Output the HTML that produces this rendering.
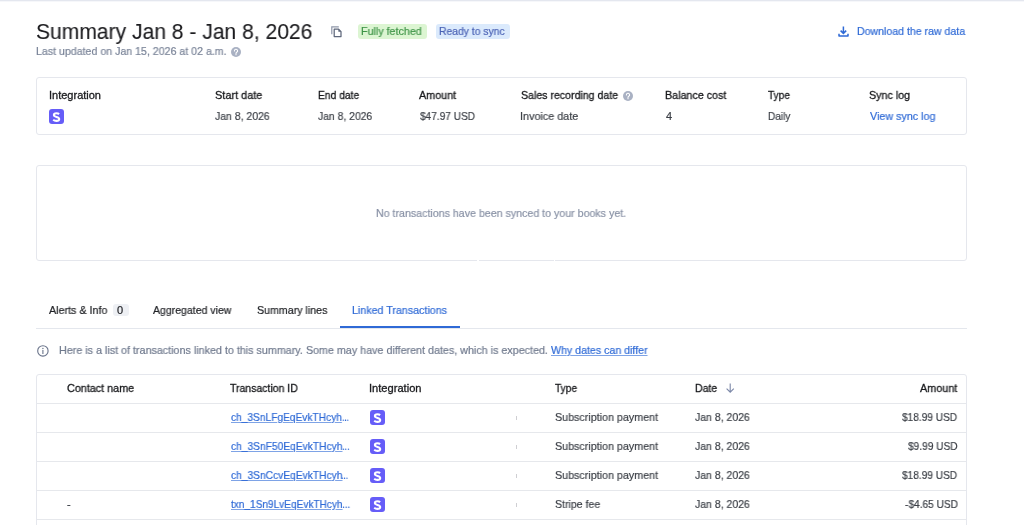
<!DOCTYPE html>
<html><head><meta charset="utf-8">
<style>
*{box-sizing:border-box;margin:0;padding:0}
html,body{width:1024px;height:525px;overflow:hidden;background:#fff}
body{font-family:"Liberation Sans",sans-serif;position:relative}
.t{position:absolute;white-space:nowrap;line-height:13px;font-size:11px;transform-origin:0 0;will-change:transform;-webkit-text-stroke:0.2px currentColor}
.title{font-size:21.5px;line-height:24px;color:#1c1c1f;-webkit-text-stroke:0.1px currentColor}
.sub{color:#7a8498}
.bt{font-size:11px}
.g{color:#3e9447}
.bl{color:#4a62b5}
.h{color:#18191c;-webkit-text-stroke:0.3px #18191c}
.v{color:#3b3f46}
.link{color:#2f6ad6}
.ul{text-decoration:underline;text-decoration-thickness:1px;text-underline-offset:1px;text-decoration-color:#7ea3e6}
.grey{color:#6f798d}
.grey2{color:#8891a5}
.tab{color:#202226;-webkit-text-stroke:0.2px currentColor}
.tab.link{color:#2f6ad6}
.card{position:absolute;border:1px solid #e5e7ed;border-radius:3px}
.badge{position:absolute;height:15px;border-radius:3px}
.s{position:absolute;width:15px;height:15px;border-radius:3px;background:#665df8}
.line{position:absolute;height:1px;background:#e6e8ec}
.tick{position:absolute;width:1px;height:4px;background:#cfcfd3}
</style></head><body>
<div style="position:absolute;left:0;top:0;width:1024px;height:1px;background:#e4e7ef"></div>
<div style="position:absolute;left:0;top:1px;width:1024px;height:1px;background:#f6f7fa"></div>
<div class="badge" style="left:358px;top:24px;width:69px;background:#dcf5d2"></div>
<div class="badge" style="left:436px;top:24px;width:74px;background:#dbeafc"></div>
<svg style="position:absolute;left:231px;top:47px" width="10" height="10" viewBox="0 0 10 10"><circle cx="5" cy="5" r="5" fill="#a9b1c3"/><path d="M3.4 3.9a1.6 1.6 0 1 1 2.3 1.4c-.5.3-.7.5-.7 1.1" fill="none" stroke="#fff" stroke-width="1.1" stroke-linecap="round"/><circle cx="5" cy="7.7" r=".65" fill="#fff"/></svg>
<svg style="position:absolute;left:623px;top:90.5px" width="10" height="10" viewBox="0 0 10 10"><circle cx="5" cy="5" r="5" fill="#a9b1c3"/><path d="M3.4 3.9a1.6 1.6 0 1 1 2.3 1.4c-.5.3-.7.5-.7 1.1" fill="none" stroke="#fff" stroke-width="1.1" stroke-linecap="round"/><circle cx="5" cy="7.7" r=".65" fill="#fff"/></svg>
<svg style="position:absolute;left:330px;top:25px" width="13" height="13" viewBox="0 0 13 13"><path d="M1.8 9.2V1.8H8.8" fill="none" stroke="#8e96a8" stroke-width="1.2"/><path d="M4.2 4.2H8.6L11 6.6V11.6H4.2Z" fill="#fff" stroke="#5e677b" stroke-width="1.25" stroke-linejoin="round"/><path d="M8.4 3.9V6.8H11.3Z" fill="#5e677b"/></svg>
<svg style="position:absolute;left:837px;top:25px" width="13" height="13" viewBox="0 0 13 13"><path d="M6.4 1.6V8.2M3.6 5.6L6.4 8.4L9.2 5.6" fill="none" stroke="#2f6ad6" stroke-width="1.5"/><path d="M2 8.7V11H11V8.7" fill="none" stroke="#2f6ad6" stroke-width="1.5" stroke-linejoin="round"/></svg>
<div class="card" style="left:36px;top:77px;width:931px;height:58px"></div>
<div class="card" style="left:36px;top:165px;width:931px;height:96px"></div>
<div class="card" style="left:36px;top:374px;width:931px;height:200px"></div>
<div style="position:absolute;left:477px;top:260px;width:2px;height:1px;background:#fff"></div>
<div style="position:absolute;left:554px;top:260px;width:1px;height:1px;background:#fff"></div>
<div class="s" style="left:49px;top:109px"><svg width="15" height="15" viewBox="0 0 15 15" style="position:absolute;left:0;top:0"><path d="M10.1 5.1C9.4 4.5 8.5 4.2 7.4 4.2C5.9 4.2 4.9 4.9 4.9 6C4.9 8.3 10.2 7.5 10.2 10C10.2 11.2 9.1 11.9 7.4 11.9C6.2 11.9 5 11.5 4.2 10.8" fill="none" stroke="#fff" stroke-width="2.1"/></svg></div>
<div class="badge" style="left:113px;top:304px;width:16px;height:12px;background:#eef0f4"></div>
<div class="t tab" style="left:117px;top:304px">0</div>
<div class="line" style="left:36px;top:328px;width:931px;background:#e4e7ed"></div>
<div style="position:absolute;left:340px;top:326px;width:120px;height:2px;background:#2f6ad6"></div>
<svg style="position:absolute;left:37px;top:345px" width="12" height="12" viewBox="0 0 12 12"><circle cx="5.9" cy="5.9" r="5.2" fill="none" stroke="#69738a" stroke-width="1.1"/><path d="M5.9 5.1V8.9" stroke="#69738a" stroke-width="1.1"/><circle cx="5.9" cy="3.5" r=".7" fill="#69738a"/></svg>
<div class="line" style="left:37px;top:403px;width:929px"></div>
<div class="line" style="left:37px;top:432px;width:929px"></div>
<div class="line" style="left:37px;top:461px;width:929px"></div>
<div class="line" style="left:37px;top:490px;width:929px"></div>
<div class="line" style="left:37px;top:519px;width:929px"></div>
<svg style="position:absolute;left:724px;top:382px" width="13" height="12" viewBox="0 0 13 12"><path d="M6.2 1.5V10.2M2.6 6.6L6.2 10.2L9.8 6.6" fill="none" stroke="#7c88a8" stroke-width="1.1"/></svg>
<div class="s" style="left:370px;top:410px"><svg width="15" height="15" viewBox="0 0 15 15" style="position:absolute;left:0;top:0"><path d="M10.1 5.1C9.4 4.5 8.5 4.2 7.4 4.2C5.9 4.2 4.9 4.9 4.9 6C4.9 8.3 10.2 7.5 10.2 10C10.2 11.2 9.1 11.9 7.4 11.9C6.2 11.9 5 11.5 4.2 10.8" fill="none" stroke="#fff" stroke-width="2.1"/></svg></div>
<div class="tick" style="left:516px;top:416px"></div>
<div class="s" style="left:370px;top:439px"><svg width="15" height="15" viewBox="0 0 15 15" style="position:absolute;left:0;top:0"><path d="M10.1 5.1C9.4 4.5 8.5 4.2 7.4 4.2C5.9 4.2 4.9 4.9 4.9 6C4.9 8.3 10.2 7.5 10.2 10C10.2 11.2 9.1 11.9 7.4 11.9C6.2 11.9 5 11.5 4.2 10.8" fill="none" stroke="#fff" stroke-width="2.1"/></svg></div>
<div class="tick" style="left:516px;top:445px"></div>
<div class="s" style="left:370px;top:468px"><svg width="15" height="15" viewBox="0 0 15 15" style="position:absolute;left:0;top:0"><path d="M10.1 5.1C9.4 4.5 8.5 4.2 7.4 4.2C5.9 4.2 4.9 4.9 4.9 6C4.9 8.3 10.2 7.5 10.2 10C10.2 11.2 9.1 11.9 7.4 11.9C6.2 11.9 5 11.5 4.2 10.8" fill="none" stroke="#fff" stroke-width="2.1"/></svg></div>
<div class="tick" style="left:516px;top:474px"></div>
<div class="s" style="left:370px;top:497px"><svg width="15" height="15" viewBox="0 0 15 15" style="position:absolute;left:0;top:0"><path d="M10.1 5.1C9.4 4.5 8.5 4.2 7.4 4.2C5.9 4.2 4.9 4.9 4.9 6C4.9 8.3 10.2 7.5 10.2 10C10.2 11.2 9.1 11.9 7.4 11.9C6.2 11.9 5 11.5 4.2 10.8" fill="none" stroke="#fff" stroke-width="2.1"/></svg></div>
<div class="tick" style="left:516px;top:503px"></div>
<div class="t v" style="left:67px;top:498px">-</div>
<div id="title" class="t title" style="left:35.77px;top:20px;transform:scaleX(0.9800)">Summary Jan 8 - Jan 8, 2026</div>
<div id="sub" class="t sub" style="left:35.72px;top:45px;transform:scaleX(0.9648)">Last updated on Jan 15, 2026 at 02 a.m.</div>
<div id="b1t" class="t bt g" style="left:361.45px;top:25px;transform:scaleX(0.9737)">Fully fetched</div>
<div id="b2t" class="t bt bl" style="left:439.22px;top:25px;transform:scaleX(0.9418)">Ready to sync</div>
<div id="dl" class="t v link" style="left:857.45px;top:25px;transform:scaleX(0.9608)">Download the raw data</div>
<div id="h1" class="t h" style="left:48.77px;top:89px;transform:scaleX(0.9932)">Integration</div>
<div id="h2" class="t h" style="left:214.62px;top:89px;transform:scaleX(0.9910)">Start date</div>
<div id="h3" class="t h" style="left:317.71px;top:89px;transform:scaleX(0.9350)">End date</div>
<div id="h4" class="t h" style="left:419.27px;top:89px;transform:scaleX(0.9804)">Amount</div>
<div id="h5" class="t h" style="left:521.41px;top:89px;transform:scaleX(0.9623)">Sales recording date</div>
<div id="h6" class="t h" style="left:665.42px;top:89px;transform:scaleX(0.9737)">Balance cost</div>
<div id="h7" class="t h" style="left:768.25px;top:89px;transform:scaleX(0.9211)">Type</div>
<div id="h8" class="t h" style="left:869.40px;top:89px;transform:scaleX(0.9740)">Sync log</div>
<div id="v2" class="t v" style="left:215.24px;top:110px;transform:scaleX(0.9519)">Jan 8, 2026</div>
<div id="v3" class="t v" style="left:317.64px;top:110px;transform:scaleX(0.9434)">Jan 8, 2026</div>
<div id="v4" class="t v" style="left:419.64px;top:110px;transform:scaleX(0.9177)">$47.97 USD</div>
<div id="v5" class="t v" style="left:520.46px;top:110px;transform:scaleX(0.9814)">Invoice date</div>
<div id="v6" class="t v" style="left:665.50px;top:110px;transform:scaleX(1.0000)">4</div>
<div id="v7" class="t v" style="left:767.92px;top:110px;transform:scaleX(0.9133)">Daily</div>
<div id="v8" class="t v link" style="left:869.75px;top:110px;transform:scaleX(0.9761)">View sync log</div>
<div id="empty" class="t v grey2" style="left:375.69px;top:207px;transform:scaleX(0.9669)">No transactions have been synced to your books yet.</div>
<div id="tab1" class="t tab" style="left:48.50px;top:304px;transform:scaleX(0.9752)">Alerts &amp; Info</div>
<div id="tab2" class="t tab" style="left:153.25px;top:304px;transform:scaleX(0.9558)">Aggregated view</div>
<div id="tab3" class="t tab" style="left:256.85px;top:304px;transform:scaleX(0.9683)">Summary lines</div>
<div id="tab4" class="t tab link" style="left:352.19px;top:304px;transform:scaleX(0.9713)">Linked Transactions</div>
<div id="info" class="t v grey" style="left:58.68px;top:344px;transform:scaleX(0.9761)">Here is a list of transactions linked to this summary. Some may have different dates, which is expected.</div>
<div id="infol" class="t v link ul" style="left:551.25px;top:344px;transform:scaleX(0.9649)">Why dates can differ</div>
<div id="th1" class="t h" style="left:67.28px;top:382px;transform:scaleX(0.9807)">Contact name</div>
<div id="th2" class="t h" style="left:230.38px;top:382px;transform:scaleX(0.9531)">Transaction ID</div>
<div id="th3" class="t h" style="left:369.17px;top:382px;transform:scaleX(1.0109)">Integration</div>
<div id="th4" class="t h" style="left:555.48px;top:382px;transform:scaleX(0.9272)">Type</div>
<div id="th5" class="t h" style="left:694.69px;top:382px;transform:scaleX(0.9587)">Date</div>
<div id="th6" class="t h" style="left:920.49px;top:382px;transform:scaleX(0.9844)">Amount</div>
<div id="l0" class="t v link ul" style="left:230.56px;top:411px;transform:scaleX(0.9255)">ch_3SnLFgEqEvkTHcyh</div>
<div id="e0" class="t v link" style="left:341.62px;top:411px;transform:scaleX(0.7749)">...</div>
<div id="ty0" class="t v" style="left:555.33px;top:411px;transform:scaleX(0.9744)">Subscription payment</div>
<div id="d0" class="t v" style="left:694.91px;top:411px;transform:scaleX(0.9540)">Jan 8, 2026</div>
<div id="a0" class="t v" style="left:902.46px;top:411px;transform:scaleX(0.9185)">$18.99 USD</div>
<div id="l1" class="t v link ul" style="left:230.57px;top:440px;transform:scaleX(0.9297)">ch_3SnF50EqEvkTHcyh</div>
<div id="e1" class="t v link" style="left:341.81px;top:440px;transform:scaleX(0.8353)">...</div>
<div id="ty1" class="t v" style="left:555.33px;top:440px;transform:scaleX(0.9744)">Subscription payment</div>
<div id="d1" class="t v" style="left:694.91px;top:440px;transform:scaleX(0.9540)">Jan 8, 2026</div>
<div id="a1" class="t v" style="left:908.35px;top:440px;transform:scaleX(0.9229)">$9.99 USD</div>
<div id="l2" class="t v link ul" style="left:230.57px;top:469px;transform:scaleX(0.9298)">ch_3SnCcvEqEvkTHcyh</div>
<div id="e2" class="t v link" style="left:341.41px;top:469px;transform:scaleX(0.7922)">...</div>
<div id="ty2" class="t v" style="left:555.33px;top:469px;transform:scaleX(0.9744)">Subscription payment</div>
<div id="d2" class="t v" style="left:694.91px;top:469px;transform:scaleX(0.9540)">Jan 8, 2026</div>
<div id="a2" class="t v" style="left:902.46px;top:469px;transform:scaleX(0.9185)">$18.99 USD</div>
<div id="l3" class="t v link ul" style="left:230.50px;top:498px;transform:scaleX(0.9171)">txn_1Sn9LvEqEvkTHcyh</div>
<div id="e3" class="t v link" style="left:342.26px;top:498px;transform:scaleX(0.9080)">...</div>
<div id="ty3" class="t v" style="left:555.34px;top:498px;transform:scaleX(0.9615)">Stripe fee</div>
<div id="d3" class="t v" style="left:694.91px;top:498px;transform:scaleX(0.9540)">Jan 8, 2026</div>
<div id="a3" class="t v" style="left:905.21px;top:498px;transform:scaleX(0.9211)">-$4.65 USD</div>
</body></html>
